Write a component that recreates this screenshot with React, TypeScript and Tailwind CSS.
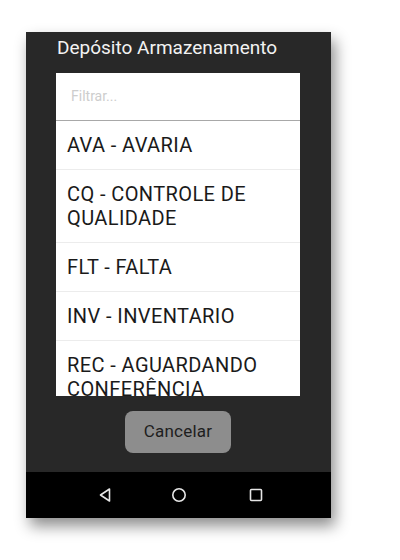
const items = [
  'AVA - AVARIA',
  'CQ - CONTROLE DE QUALIDADE',
  'FLT - FALTA',
  'INV - INVENTARIO',
  'REC - AGUARDANDO CONFERÊNCIA',
]

export default function App() {
  return (
    <div className="w-[400px] h-[560px] bg-white pt-[32px] pl-[26px]" style={{ fontFamily: 'Roboto, "Noto Sans", sans-serif' }}>
      <div className="w-[305px] h-[486px] flex flex-col shadow-[4px_8px_14px_rgba(0,0,0,0.45)]">
        {/* Dialog */}
        <div className="flex-1 bg-[#282828] flex flex-col pl-[30px] pr-[31px]">
          <div className="h-[41px] pl-[1px] pt-[4px] text-[19px] leading-[24px] text-[#f2f2f2]">
            Depósito Armazenamento
          </div>
          <div className="h-[323px] bg-white overflow-hidden flex flex-col shrink-0">
            <div className="h-[48px] shrink-0 border-b border-[#a8a8a8] pl-[15px] flex items-center text-[14px] text-[#cdcdcd]">
              Filtrar...
            </div>
            {items.map((item) => (
              <div key={item} className="shrink-0 border-b border-[#ececec] px-[11px] py-[12px] text-[20px] tracking-[0.4px] leading-[24px] text-[#1a1a1a]">
                {item}
              </div>
            ))}
          </div>
          <div className="flex-1 flex justify-center pt-[15px]">
            <button className="w-[106px] h-[42px] rounded-[8px] bg-[#8d8d8d] text-[17px] tracking-[0.2px] text-[#1e1e1e]">
              Cancelar
            </button>
          </div>
        </div>
        {/* Nav bar */}
        <div className="h-[46px] bg-black flex items-center">
          <div className="w-[71px]" />
          <svg width="16" height="16" viewBox="0 0 16 16" className="mr-[58px]">
            <path d="M12.5 2 L3.5 8 L12.5 14 Z" fill="none" stroke="#e6e6e6" strokeWidth="1.6" strokeLinejoin="round" />
          </svg>
          <svg width="16" height="16" viewBox="0 0 16 16" className="mr-[62px]">
            <circle cx="8" cy="8" r="6.2" fill="none" stroke="#e6e6e6" strokeWidth="1.6" />
          </svg>
          <svg width="14" height="14" viewBox="0 0 14 14">
            <rect x="1.5" y="1.5" width="11" height="11" rx="1" fill="none" stroke="#e6e6e6" strokeWidth="1.6" />
          </svg>
        </div>
      </div>
    </div>
  )
}
